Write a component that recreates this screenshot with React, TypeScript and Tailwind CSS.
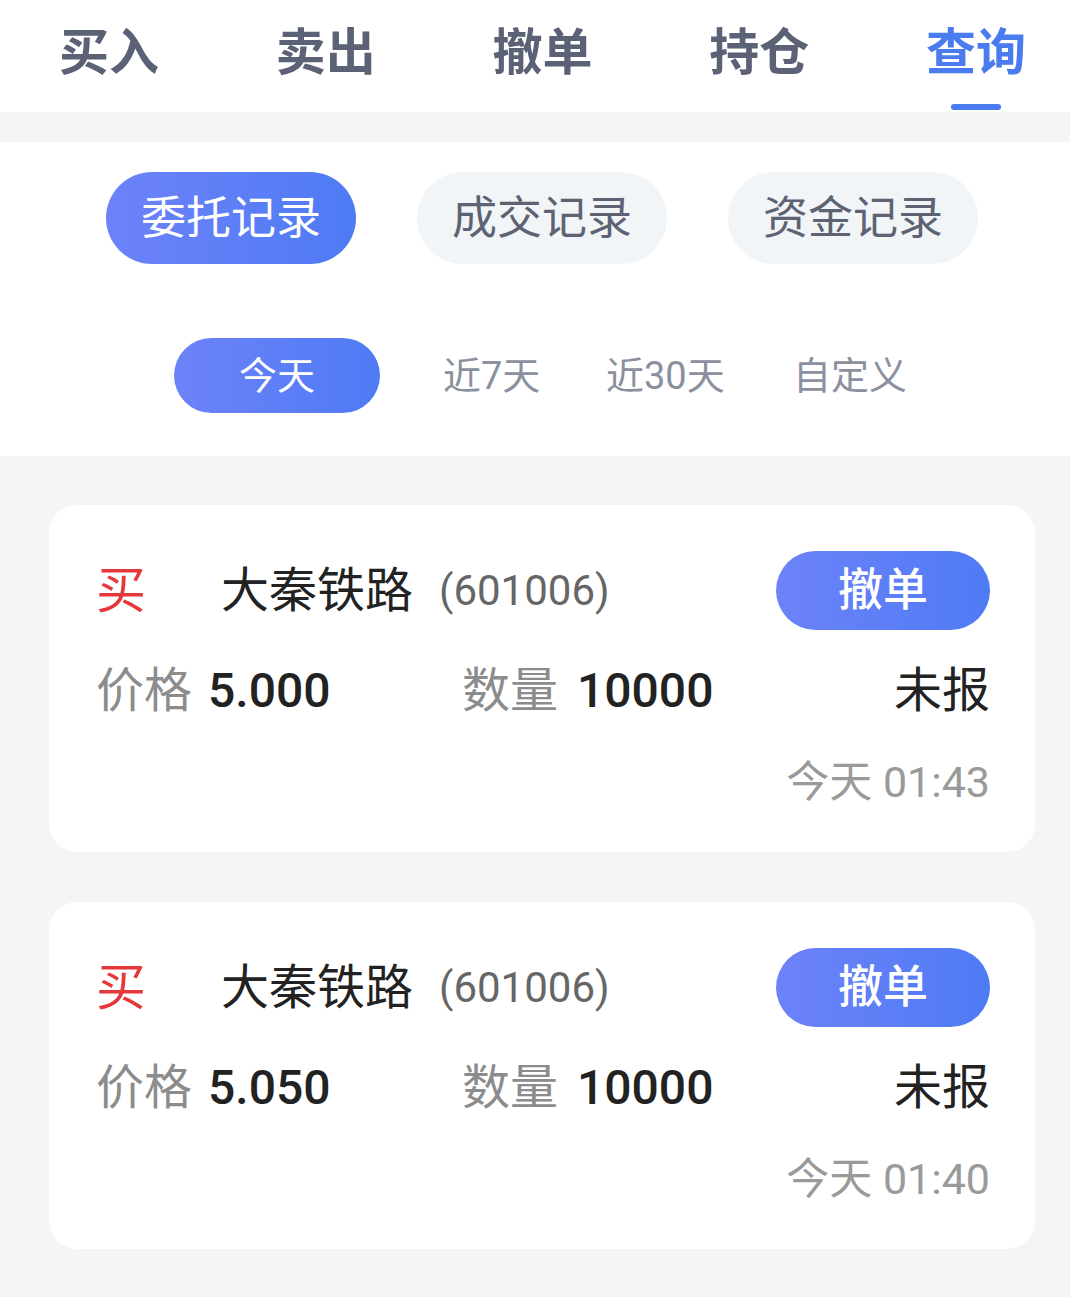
import React, { useState } from 'react';

const tabs = ['买入', '卖出', '撤单', '持仓', '查询'];
const recordTypes = ['委托记录', '成交记录', '资金记录'];
const ranges = [
  { label: '今天', w: '' },
  { label: '近7天', w: 'w-[163px]' },
  { label: '近30天', w: 'w-[187px]' },
  { label: '自定义', w: '' },
];

interface Order {
  side: string;
  name: string;
  code: string;
  price: string;
  qty: string;
  status: string;
  time: string;
}

const orders: Order[] = [
  { side: '买', name: '大秦铁路', code: '601006', price: '5.000', qty: '10000', status: '未报', time: '今天 01:43' },
  { side: '买', name: '大秦铁路', code: '601006', price: '5.050', qty: '10000', status: '未报', time: '今天 01:40' },
];

const OrderCard: React.FC<{ order: Order }> = ({ order }) => (
  <div className="h-[347px] rounded-[28px] bg-white pl-[47px] pr-[45px] pt-[46px]">
    {/* name + cancel button */}
    <div className="flex h-[79px] items-center">
      <span className="w-[50px] text-[50px] leading-none text-[#e5383b]">{order.side}</span>
      <span className="ml-[75px] text-[48px] leading-none text-[#222]">{order.name}</span>
      <span className="ml-[26px] text-[42px] leading-none text-[#666]">({order.code})</span>
      <button className="ml-auto h-[79px] w-[214px] rounded-full bg-gradient-to-r from-[#6d82f9] to-[#4d7bf4] text-[45px] font-medium leading-none text-white">
        撤单
      </button>
    </div>

    {/* price / qty / status */}
    <div className="mt-[31px] flex h-[60px] items-center">
      <div className="flex w-[366px] items-center">
        <span className="text-[48px] leading-none text-[#8c8c8c]">价格</span>
        <span className="ml-[16px] text-[48px] font-medium leading-none text-[#222]">{order.price}</span>
      </div>
      <div className="flex items-center">
        <span className="text-[48px] leading-none text-[#8c8c8c]">数量</span>
        <span className="ml-[19px] text-[48px] font-medium leading-none text-[#222]">{order.qty}</span>
      </div>
      <span className="ml-auto text-[48px] leading-none text-[#222]">{order.status}</span>
    </div>

    {/* time */}
    <div className="mt-[36px] flex h-[50px] items-center justify-end">
      <span className="text-[43px] leading-none text-[#9a9a9a]">{order.time}</span>
    </div>
  </div>
);

export default function App() {
  const [activeTab, setActiveTab] = useState(4);
  const [activeType, setActiveType] = useState(0);
  const [activeRange, setActiveRange] = useState(0);

  return (
    <div className="min-h-[1297px] w-[1070px] bg-[#f5f5f5] font-['Roboto','Noto_Sans_CJK_SC',sans-serif]">
      {/* Top tabs */}
      <div className="flex h-[112px] justify-between bg-white pl-[59px] pr-[44px] pt-[28px]">
        {tabs.map((t, i) => (
          <button
            key={t}
            onClick={() => setActiveTab(i)}
            className={`relative h-[50px] text-[50px] font-bold leading-none ${
              i === activeTab ? 'text-[#4a7cf0]' : 'text-[#5c6275]'
            }`}
          >
            {t}
            {i === activeTab && (
              <span className="absolute left-1/2 top-[76px] h-[6px] w-[50px] -translate-x-1/2 rounded-full bg-[#4a7cf0]" />
            )}
          </button>
        ))}
      </div>

      <div className="h-[30px] bg-[#f5f5f5]" />

      {/* Filters */}
      <div className="bg-white pb-[43px] pt-[30px]">
        <div className="flex gap-[61px] pl-[106px]">
          {recordTypes.map((r, i) => (
            <button
              key={r}
              onClick={() => setActiveType(i)}
              className={`h-[92px] w-[250px] rounded-full text-[45px] leading-none ${
                i === activeType
                  ? 'bg-gradient-to-r from-[#6d82f9] to-[#4d7bf4] text-white'
                  : 'bg-[#f1f5f8] text-[#5d6373]'
              }`}
            >
              {r}
            </button>
          ))}
        </div>

        <div className="mt-[74px] flex items-center pl-[174px]">
          {ranges.map((r, i) =>
            i === activeRange ? (
              <button
                key={r.label}
                onClick={() => setActiveRange(i)}
                className="mr-[63px] h-[75px] w-[206px] rounded-full bg-gradient-to-r from-[#6d82f9] to-[#4d7bf4] text-[38px] leading-none text-white"
              >
                {r.label}
              </button>
            ) : (
              <button
                key={r.label}
                onClick={() => setActiveRange(i)}
                className={`${r.w} text-left text-[38px] leading-none text-[#8b909e]`}
              >
                {r.label}
              </button>
            )
          )}
        </div>
      </div>

      {/* Orders */}
      <div className="flex flex-col gap-[50px] pb-[49px] pl-[49px] pr-[35px] pt-[49px]">
        {orders.map((o, i) => (
          <OrderCard key={i} order={o} />
        ))}
      </div>
    </div>
  );
}
